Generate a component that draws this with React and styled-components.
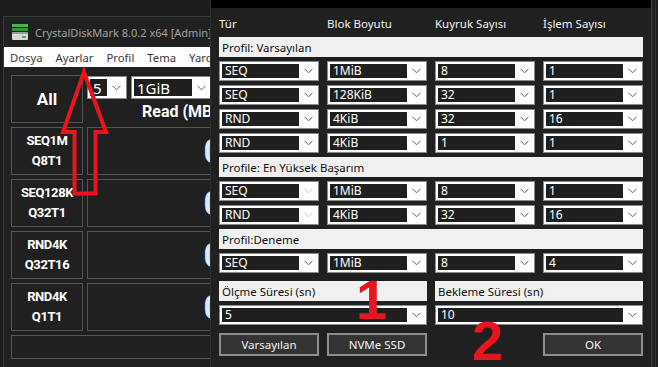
import React from "react";
import styled, { createGlobalStyle } from "styled-components";

const GlobalStyle = createGlobalStyle`
  html, body { margin: 0; padding: 0; background: #1c1c1c; }
  body {
    width: 658px; height: 367px; overflow: hidden;
    font-family: "Noto Sans", "Liberation Sans", sans-serif;
  }
  * { box-sizing: border-box; }
`;

const Desktop = styled.div`
  position: relative;
  width: 658px;
  height: 367px;
  overflow: hidden;
  background: #1c1c1c;
`;

/* ---------- main CrystalDiskMark window (behind) ---------- */

const MainWindow = styled.div`
  position: absolute;
  left: 3px;
  top: 16px;
  width: 420px;
  height: 360px;
  background: #202020;
  border-top: 1px solid #3a3a3a;
  border-left: 1px solid #3a3a3a;
`;

const TitleBar = styled.div`
  height: 30px;
  display: flex;
  align-items: center;
  gap: 6px;
  padding-left: 7px;
  color: #a2a2a2;
  font-size: 11px;
  white-space: nowrap;
`;

const MenuBar = styled.div`
  height: 20px;
  background: #ffffff;
  display: flex;
  align-items: center;
`;

const MenuItem = styled.span`
  padding: 0 7px 0 6px;
  font-size: 11.3px;
  color: #3a3a3a;
`;

const Board = styled.div`
  display: grid;
  grid-template-columns: 72px 200px;
  grid-auto-rows: 48px;
  gap: 4px;
  padding: 8px 7px 0 7px;
`;

const Tile = styled.div`
  border: 1px solid #555555;
  display: flex;
  flex-direction: column;
  align-items: center;
  justify-content: center;
  font-family: Roboto, "Noto Sans", sans-serif;
  font-weight: 700;
  color: #ffffff;
  font-size: ${(p) => (p.$big ? "17px" : "13px")};
  letter-spacing: ${(p) => (p.$big ? "0" : "-0.4px")};
  line-height: 20px;
  white-space: nowrap;
`;

const ResultTile = styled.div`
  border: 1px solid #555555;
  display: flex;
  align-items: center;
  justify-content: flex-end;
  padding-right: 14px;
  font-family: Roboto, sans-serif;
  font-weight: 700;
  font-size: 34px;
  color: #dbe9f7;
`;

const HeadCell = styled.div`
  display: flex;
  flex-direction: column;
`;

const ToolRow = styled.div`
  display: flex;
  gap: 4px;
  margin-top: 1px;
  height: 23px;
`;

const ColumnTitle = styled.div`
  text-align: center;
  font-family: Roboto, sans-serif;
  font-weight: 700;
  font-size: 16px;
  color: #ffffff;
  line-height: 24px;
  margin-top: 1px;
  white-space: nowrap;
`;

const StatusBar = styled.div`
  margin: 4px 7px 0 7px;
  height: 24px;
  width: 276px;
  border: 1px solid #555555;
`;

/* ---------- combo boxes ---------- */

const ComboFrame = styled.div`
  width: ${(p) => p.$w || "auto"};
  height: ${(p) => p.$h || "20px"};
  border: 1px solid #8a8a8a;
  background: #ffffff;
  padding: 2px 0 2px 2px;
  display: flex;
  align-items: stretch;
`;

const ComboValue = styled.div`
  flex: 1;
  background: #1f1f1f;
  color: #ffffff;
  font-size: ${(p) => p.$fs || "12px"};
  line-height: 14px;
  padding-left: 3px;
  display: flex;
  align-items: center;
  white-space: nowrap;
`;

const ComboArrow = styled.div`
  width: 19px;
  display: flex;
  align-items: center;
  justify-content: center;
`;

const Chevron = ({ dim }) => (
  <svg width="9" height="6" viewBox="0 0 9 6">
    <polyline
      points="0.5,0.8 4.5,4.8 8.5,0.8"
      fill="none"
      stroke={dim ? "#c6c6c6" : "#606060"}
      strokeWidth="1"
    />
  </svg>
);

const Combo = ({ value, dim, w, h, fs }) => (
  <ComboFrame $w={w} $h={h}>
    <ComboValue $fs={fs}>{value}</ComboValue>
    <ComboArrow>
      <Chevron dim={dim} />
    </ComboArrow>
  </ComboFrame>
);

/* ---------- settings dialog (front) ---------- */

const Dialog = styled.div`
  position: absolute;
  left: 210px;
  top: 0;
  width: 442px;
  height: 367px;
  background: #202020;
  border-left: 1px solid #2f2f2f;
  border-right: 1px solid #3c3c3c;
  display: flex;
  flex-direction: column;
`;

const DialogCaption = styled.div`
  height: 8px;
  background: #000000;
`;

const DialogBody = styled.div`
  padding: 0 8px;
  display: flex;
  flex-direction: column;
  gap: 4px;
`;

const Grid4 = styled.div`
  display: grid;
  grid-template-columns: repeat(4, 1fr);
  column-gap: 8px;
  margin-top: ${(p) => p.$mt || "0"};
`;

const Grid2 = styled.div`
  display: grid;
  grid-template-columns: 1fr 1fr;
  column-gap: 8px;
  margin-top: ${(p) => p.$mt || "0"};
`;

const HeaderRow = styled(Grid4)`
  height: 25px;
  align-items: end;
  padding-bottom: 1px;
  color: #f2f2f2;
  font-size: 11.5px;
  line-height: 16px;
`;

const SectionBar = styled.div`
  height: 20px;
  background: #f0f0f0;
  color: #111111;
  font-size: 11.5px;
  padding-left: 3px;
  display: flex;
  align-items: center;
  white-space: nowrap;
`;

const Button = styled.button`
  height: 23px;
  border: 2px solid #8e8e8e;
  background: #333333;
  color: #f4f4f4;
  font-family: "Noto Sans", sans-serif;
  font-size: 11.5px;
  line-height: 17px;
  padding: 0;
  grid-column: ${(p) => p.$col};
`;

const SideWindow = styled.div`
  position: absolute;
  left: 652px;
  top: 0;
  width: 10px;
  height: 367px;
  background: #1e1e1e;
  border-left: 1px solid #2a2a2a;
  &::after {
    content: "";
    position: absolute;
    left: 2px;
    top: 0;
    bottom: 0;
    border-left: 1px solid #333333;
  }
`;

/* ---------- red annotations ---------- */

const Overlay = styled.svg`
  position: absolute;
  left: 0;
  top: 0;
  pointer-events: none;
`;

const Mark = styled.div`
  position: absolute;
  left: ${(p) => p.$x}px;
  top: ${(p) => p.$y}px;
  color: #e8141e;
  font-family: "Liberation Sans", Arial, sans-serif;
  font-weight: 700;
  font-size: 56px;
  line-height: 56px;
`;

const DiskIcon = () => (
  <svg width="18" height="18" viewBox="0 0 18 18">
    <rect x="1" y="1" width="16" height="3" fill="#43b649" />
    <rect x="1" y="5" width="16" height="3" fill="#2e9a3a" />
    <rect x="1" y="9" width="16" height="8" rx="1" fill="#d8d8d8" />
    <rect x="1" y="9" width="16" height="2" fill="#9c9c9c" />
    <rect x="11" y="13" width="4" height="2" fill="#43b649" />
  </svg>
);

const profiles = [
  {
    title: "Profil: Varsayılan",
    rows: [
      ["SEQ", "1MiB", "8", "1"],
      ["SEQ", "128KiB", "32", "1"],
      ["RND", "4KiB", "32", "16"],
      ["RND", "4KiB", "1", "1"],
    ],
  },
  {
    title: "Profile: En Yüksek Başarım",
    dimType: true,
    rows: [
      ["SEQ", "1MiB", "8", "1"],
      ["RND", "4KiB", "32", "16"],
    ],
  },
  {
    title: "Profil:Deneme",
    rows: [["SEQ", "1MiB", "8", "4"]],
  },
];

const tests = [
  ["SEQ1M", "Q8T1"],
  ["SEQ128K", "Q32T1"],
  ["RND4K", "Q32T16"],
  ["RND4K", "Q1T1"],
];

export default function App() {
  return (
    <Desktop>
      <GlobalStyle />

      <MainWindow>
        <TitleBar>
          <DiskIcon />
          <span>CrystalDiskMark 8.0.2 x64 [Admin]</span>
        </TitleBar>
        <MenuBar>
          {["Dosya", "Ayarlar", "Profil", "Tema", "Yardım"].map((m) => (
            <MenuItem key={m}>{m}</MenuItem>
          ))}
        </MenuBar>
        <Board>
          <Tile $big>All</Tile>
          <HeadCell>
            <ToolRow>
              <Combo value="5" w="40px" h="23px" fs="15px" />
              <Combo value="1GiB" w="81px" h="23px" fs="15px" />
            </ToolRow>
            <ColumnTitle>Read (MB/s)</ColumnTitle>
          </HeadCell>
          {tests.map(([a, b]) => (
            <React.Fragment key={a + b}>
              <Tile>
                <span>{a}</span>
                <span>{b}</span>
              </Tile>
              <ResultTile>0.00</ResultTile>
            </React.Fragment>
          ))}
        </Board>
        <StatusBar />
      </MainWindow>

      <SideWindow />

      <Dialog>
        <DialogCaption />
        <DialogBody>
          <HeaderRow>
            <span>Tür</span>
            <span>Blok Boyutu</span>
            <span>Kuyruk Sayısı</span>
            <span>İşlem Sayısı</span>
          </HeaderRow>
          {profiles.map((p) => (
            <React.Fragment key={p.title}>
              <SectionBar>{p.title}</SectionBar>
              {p.rows.map((r, i) => (
                <Grid4 key={i}>
                  {r.map((v, j) => (
                    <Combo key={j} value={v} dim={p.dimType && j === 0} />
                  ))}
                </Grid4>
              ))}
            </React.Fragment>
          ))}
          <Grid2 $mt="4px">
            <SectionBar>Ölçme Süresi (sn)</SectionBar>
            <SectionBar>Bekleme Süresi (sn)</SectionBar>
          </Grid2>
          <Grid2>
            <Combo value="5" />
            <Combo value="10" />
          </Grid2>
          <Grid4 $mt="4px">
            <Button $col="1">Varsayılan</Button>
            <Button $col="2">NVMe SSD</Button>
            <Button $col="4">OK</Button>
          </Grid4>
        </DialogBody>
      </Dialog>

      <Overlay width="658" height="367" viewBox="0 0 658 367">
        <polygon
          points="84,72 106,132 95.5,132 95.5,193.5 74.5,193.5 74.5,132 63,132"
          fill="none"
          stroke="#e8141e"
          strokeWidth="4"
          strokeLinejoin="miter"
        />
      </Overlay>
      <Mark $x={356} $y={272}>1</Mark>
      <Mark $x={472} $y={313}>2</Mark>
    </Desktop>
  );
}
